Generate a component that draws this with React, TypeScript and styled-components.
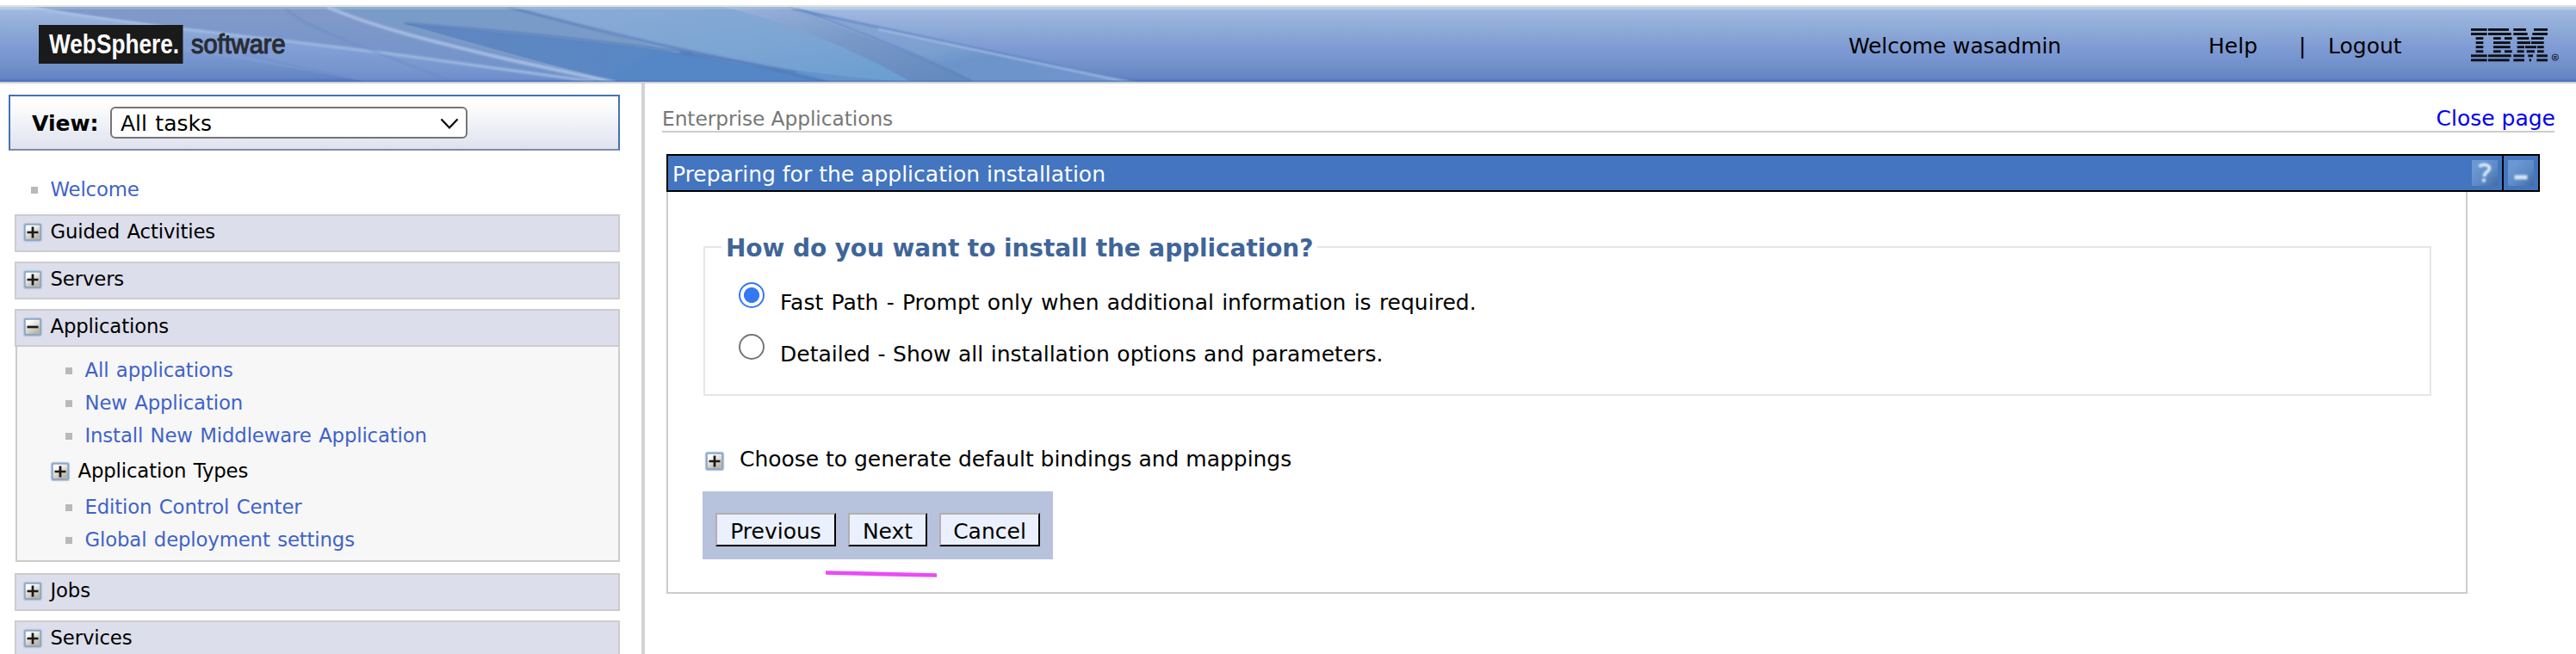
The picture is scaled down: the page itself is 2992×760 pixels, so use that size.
import React from "react";
import styled, { createGlobalStyle } from "styled-components";

const GlobalStyle = createGlobalStyle`
  * { box-sizing: border-box; }
  body {
    margin: 0;
    background: #fff;
    color: #000;
    font-family: "DejaVu Sans", Verdana, sans-serif;
    font-size: 25px;
    line-height: 30px;
  }
`;

const Page = styled.div`
  display: flex;
  flex-direction: column;
  width: 2992px;
  height: 760px;
  overflow: hidden;
`;

/* ---------- banner ---------- */

const Banner = styled.header`
  position: relative;
  flex: none;
  display: flex;
  justify-content: space-between;
  height: 91px;
  margin-top: 6px;
  border-top: 2px solid #e0e2de;
  border-bottom: 2px solid #cfcfd1;
`;

const BannerArt = styled.svg`
  position: absolute;
  inset: 0;
  display: block;
`;

const Brand = styled.div`
  position: relative;
  display: flex;
  margin: 21px 0 0 45px;
`;

const BannerNav = styled.nav`
  position: relative;
  display: grid;
  grid-template-columns: 418px 105px 34px 166px 122px;
  padding-top: 31px;
  white-space: nowrap;
`;

const NavItem = styled.span<{ $tracking?: number }>`
  line-height: 30px;
  letter-spacing: ${(p) => p.$tracking ?? 0}px;
`;

const IbmMark = styled.svg`
  display: block;
  margin-top: -6px;
`;

/* ---------- frames ---------- */

const Frames = styled.div`
  flex: 1;
  min-height: 0;
  display: flex;
`;

const Sidebar = styled.aside`
  flex: none;
  width: 749px;
  padding: 13px 25px 0 10px;
  border-right: 4px solid #d3d3d3;
  font-size: 22.8px;
  letter-spacing: -0.15px;
  word-spacing: 1.4px;
`;

const ViewBox = styled.div`
  display: flex;
  align-items: center;
  height: 65px;
  padding: 0 0 0 25px;
  border: 2px solid #4571b2;
  border-bottom-color: #7b8ca5;
  background: linear-gradient(#fff 10%, #dfe2ef);
  font-size: 25px;
  letter-spacing: 0;
`;

const ViewLabel = styled.label`
  width: 91px;
  font-weight: bold;
  padding-top: 2px;
`;

const ViewSelect = styled.div`
  display: flex;
  align-items: center;
  justify-content: space-between;
  width: 415px;
  height: 37px;
  padding: 2px 8px 0 10px;
  border: 2px solid #767676;
  border-radius: 6px;
  background: #fff;
`;

const Tree = styled.div`
  padding-left: 7px;
`;

const LinkRow = styled.div<{ $indent: number }>`
  display: flex;
  align-items: center;
  gap: 14.5px;
  height: 38px;
  padding-left: ${(p) => p.$indent}px;
  color: #3f63c9;
  &::before {
    content: "";
    width: 8px;
    height: 8px;
    margin-top: 2px;
    background: #b9b9b9;
  }
`;

const WelcomeRow = styled(LinkRow)`
  margin: 26px 0 10px;
`;

const Section = styled.section<{ $gap?: number }>`
  margin-bottom: ${(p) => p.$gap ?? 11}px;
`;

const SectionHead = styled.div`
  display: flex;
  align-items: center;
  gap: 8.5px;
  height: 44px;
  padding: 0 0 4px 7px;
  border: 2px solid #ccc;
  background: #dddeeb;
`;

const SectionBody = styled.div`
  height: 250px;
  margin-left: 1px;
  padding-top: 8px;
  border: 2px solid #ccc;
  border-top: 0;
  background: #f7f7f7;
`;

const GroupRow = styled.div`
  display: flex;
  align-items: center;
  gap: 8.5px;
  height: 45px;
  padding: 0 0 1px 38px;
`;

const ToggleSvg = styled.svg<{ $drop: number }>`
  flex: none;
  display: block;
  margin-top: ${(p) => p.$drop}px;
`;

/* ---------- content ---------- */

const Content = styled.main`
  flex: 1;
  padding: 0 25px 0 20px;
`;

const Crumb = styled.div`
  display: flex;
  justify-content: space-between;
  align-items: baseline;
  height: 57px;
  padding-top: 26px;
  border-bottom: 2px solid #ccc;
`;

const CrumbTitle = styled.span`
  font-size: 23.3px;
  letter-spacing: -0.06px;
  color: #777;
`;

const CloseLink = styled.a`
  margin-right: -1px;
  color: #0000ee;
`;

const TitleBar = styled.div`
  display: flex;
  width: 2176px;
  height: 44px;
  margin: 25px 0 0 5px;
  border: 2px solid #000;
  background: #4475c0;
`;

const TitleText = styled.h1`
  flex: 1;
  margin: 0;
  padding: 7px 0 0 5px;
  color: #fff;
  font-size: 25px;
  font-weight: normal;
`;

const TitleAction = styled.div`
  display: flex;
  align-items: center;
  padding: 0 5px;
  & + & {
    border-left: 2px solid #000;
  }
`;

const Panel = styled.div`
  width: 2092px;
  height: 467px;
  margin-left: 5px;
  padding: 46px 40px 0 40px;
  border: 2px solid #ccc;
  border-top: 0;
`;

const Choices = styled.fieldset`
  height: 191px;
  margin: 0 0 0 1px;
  padding: 23px 0 0 19px;
  border: 2px solid #e6e6e6;
`;

const Question = styled.legend`
  padding: 3px 5px 0 5px;
  color: #3f6599;
  font-size: 28px;
  font-weight: bold;
  line-height: 33px;
  letter-spacing: -0.09px;
`;

const Choice = styled.label`
  display: flex;
  height: 60px;
  padding-left: 20px;
`;

const Radio = styled.input`
  appearance: none;
  width: 30px;
  height: 30px;
  margin: 0;
  border: 2px solid #767676;
  border-radius: 50%;
  background: #fff;
  &:checked {
    border-color: #3478f6;
    background: radial-gradient(circle, #3478f6 8.6px, #fff 9.4px);
  }
`;

const ChoiceText = styled.span<{ $words: number }>`
  margin: 9px 0 0 18px;
  word-spacing: ${(p) => p.$words}px;
`;

const Expander = styled.div`
  display: flex;
  align-items: center;
  gap: 17px;
  height: 30px;
  margin: 59px 0 22px;
  padding-left: 2px;
  letter-spacing: -0.03px;
`;

const ButtonTray = styled.div`
  position: relative;
  display: flex;
  gap: 14px;
  width: 407px;
  height: 79px;
  padding: 25px 15px 0;
  background: #b7c3dc;
`;

const PushButton = styled.button<{ $width: number }>`
  width: ${(p) => p.$width}px;
  height: 39px;
  padding: 4px 0 0;
  border: 2px solid;
  border-color: #b0b0b0 #000 #000 #b0b0b0;
  background: #ebf0fe;
  color: #000;
  font: inherit;
  line-height: 30px;
`;

const Underscore = styled.svg`
  position: absolute;
  left: 143px;
  top: 91px;
`;

/* ---------- drawings ---------- */

function Toggle({ open = false, drop = 0 }: { open?: boolean; drop?: number }) {
  return (
    <ToggleSvg $drop={drop} width="24" height="24" viewBox="0 0 24 24">
      <defs>
        <linearGradient id="face" x1="0" y1="0" x2="0.6" y2="1">
          <stop offset="0.2" stopColor="#fff" />
          <stop offset="1" stopColor="#bdb5a6" />
        </linearGradient>
      </defs>
      <rect x="0.8" y="0.8" width="22.4" height="22.4" rx="3.5" fill="#b9c9de" />
      <rect x="2" y="2" width="20" height="20" rx="2" fill="#8da7c6" />
      <rect x="3.8" y="3.8" width="16.4" height="16.2" rx="0.8" fill="url(#face)" />
      <path d={open ? "M5.5 12H18.5" : "M5.5 12H18.5M12 5.5V18.5"} stroke="#1a1a1a" strokeWidth="2.7" />
    </ToggleSvg>
  );
}

function Artwork() {
  return (
    <BannerArt width="2992" height="87" viewBox="0 8 2992 87">
      <defs>
        <linearGradient id="sky" x1="0" y1="0" x2="0" y2="1">
          <stop offset="0" stopColor="#b9d0ea" />
          <stop offset="0.035" stopColor="#b3cae8" />
          <stop offset="0.045" stopColor="#a0b8e0" />
          <stop offset="0.35" stopColor="#8aa7d6" />
          <stop offset="0.56" stopColor="#7e9ad4" />
          <stop offset="0.8" stopColor="#7090c9" />
          <stop offset="0.95" stopColor="#6383c4" />
          <stop offset="1" stopColor="#4b70be" />
        </linearGradient>
        <linearGradient id="swoop" x1="0" y1="0" x2="0" y2="1">
          <stop offset="0" stopColor="#829ac8" />
          <stop offset="1" stopColor="#6f92cc" />
        </linearGradient>
        <linearGradient id="deep" x1="0" y1="0" x2="1" y2="0">
          <stop offset="0" stopColor="#6186c0" />
          <stop offset="1" stopColor="#5289c7" />
        </linearGradient>
        <linearGradient id="pale" x1="0" y1="0" x2="0.9" y2="1">
          <stop offset="0" stopColor="#8cabd6" />
          <stop offset="0.6" stopColor="#7ca5d3" />
          <stop offset="1" stopColor="#6b9ed1" />
        </linearGradient>
        <linearGradient id="steel" x1="0" y1="0" x2="0.8" y2="1">
          <stop offset="0" stopColor="#9bb3db" />
          <stop offset="0.5" stopColor="#7899c7" />
          <stop offset="1" stopColor="#648abf" />
        </linearGradient>
        <linearGradient id="veil" x1="0" y1="0" x2="1" y2="1">
          <stop offset="0" stopColor="#8caad8" />
          <stop offset="0.5" stopColor="#7b9fd0" />
          <stop offset="0.62" stopColor="#6c94ca" />
          <stop offset="1" stopColor="#7294cf" />
        </linearGradient>
        <filter id="soft" x="-5%" y="-20%" width="110%" height="140%">
          <feGaussianBlur stdDeviation="1" />
        </filter>
      </defs>
      <rect y="8" width="2992" height="87" fill="url(#sky)" />
      <path d="M40 8C160 28 330 48 520 71C600 82 660 90 700 95H860V8Z" fill="url(#swoop)" />
      <path d="M150 55C260 62 330 78 425 95H700C630 84 480 66 350 51Z" fill="#8aa5da" opacity="0.35" />
      <path d="M385 8H600L960 95H715C600 67 480 38 385 8Z" fill="#789bc8" />
      <path d="M468 27C560 36 720 50 820 66L975 95H715C620 70 540 48 468 27Z" fill="url(#deep)" />
      <path d="M590 8H920L1060 95H900C780 60 690 32 590 8Z" fill="url(#pale)" />
      <path d="M840 8H915L1140 95H1058C1000 62 930 30 840 8Z" fill="url(#steel)" />
      <path d="M915 8L1322 95H1132C1070 62 990 28 915 8Z" fill="url(#veil)" />
      <path d="M800 62C860 76 940 90 1045 95H700L760 60Z" fill="#5587c6" />
      <path d="M880 76C940 84 990 90 1050 95H965C930 88 900 82 880 76Z" fill="#6494cb" />
      <g fill="none" filter="url(#soft)">
        <path d="M30 8C160 30 330 46 480 66C570 78 640 88 690 95" stroke="#a5c0e4" strokeWidth="3" opacity="0.85" />
        <path d="M380 8C430 30 500 48 590 69L715 96" stroke="#a4bce2" strokeWidth="4" />
        <path d="M330 8C350 32 440 60 525 95" stroke="#6482bd" strokeWidth="2" opacity="0.45" />
        <path d="M280 62L420 95" stroke="#5f7fbd" strokeWidth="2" opacity="0.35" />
        <path d="M470 27C590 36 720 50 805 62" stroke="#5379b8" strokeWidth="2" opacity="0.8" />
        <path d="M590 8C690 34 790 60 925 84" stroke="#5c80b8" strokeWidth="3" opacity="0.8" />
        <path d="M790 61C860 72 900 80 960 95" stroke="#4c76b8" strokeWidth="3" opacity="0.7" />
        <path d="M925 10C1000 36 1070 66 1132 96" stroke="#5f83bd" strokeWidth="2.5" opacity="0.7" />
        <path d="M920 10L1316 95" stroke="#5c7fbf" strokeWidth="2" opacity="0.8" />
        <path d="M1020 34L1316 97" stroke="#a9c1e8" strokeWidth="2" opacity="0.9" />
      </g>
      <rect y="8" width="2992" height="3" fill="#b4d0e8" opacity="0.35" />
      <rect y="93.5" width="2992" height="1.5" fill="#4a72c0" opacity="0.7" />
    </BannerArt>
  );
}

function WebSphereBrand() {
  return (
    <Brand>
      <svg width="168" height="45" viewBox="0 0 168 45">
        <rect width="167.5" height="45" fill="#1a1a1a" />
        <text transform="translate(12 33) scale(0.82 1)" fontFamily="Liberation Sans, Arial, sans-serif" fontSize="32" fontWeight="bold" fill="#fff">
          WebSphere.
        </text>
      </svg>
      <svg width="130" height="45" viewBox="0 0 130 45">
        <text transform="translate(9 33) scale(0.935 1)" fontFamily="Liberation Sans, Arial, sans-serif" fontSize="31" fill="#2a2c33" stroke="#2a2c33" strokeWidth="1.2">
          software
        </text>
      </svg>
    </Brand>
  );
}

/* Each entry is one stripe: pairs of start and end positions. */
const stripes: number[][][] = [
  [[0, 56], [60, 132], [148, 192], [219, 267]],
  [[0, 56], [60, 140], [148, 197], [214, 267]],
  [[17, 43], [78, 104], [117, 143], [161, 202], [210, 254]],
  [[17, 43], [78, 137], [161, 207], [210, 254]],
  [[17, 43], [78, 137], [161, 186], [189, 228], [231, 254]],
  [[17, 43], [78, 104], [117, 143], [161, 185], [194, 222], [231, 254]],
  [[0, 56], [60, 140], [148, 186], [199, 216], [229, 267]],
  [[0, 56], [60, 134], [148, 186], [203, 210], [229, 267]],
];

function Ibm() {
  return (
    <IbmMark width="106" height="40" viewBox="0 0 318 120">
      {stripes.map((row, r) =>
        row.map(([a, b]) => <rect key={`${r}-${a}`} x={a} y={r * 15.2} width={b - a} height="8.6" fill="#0b0d12" />)
      )}
      <circle cx="293.5" cy="101" r="11" fill="none" stroke="#1b2436" strokeWidth="3" />
      <text x="293.5" y="107" textAnchor="middle" fontFamily="Liberation Sans, Arial, sans-serif" fontWeight="bold" fontSize="17" fill="#0b0d12">
        R
      </text>
    </IbmMark>
  );
}

function BarIcon({ kind }: { kind: "help" | "minimize" }) {
  return (
    <svg width="30" height="30" viewBox="0 0 30 30">
      <defs>
        <linearGradient id="tile" x1="0" y1="0" x2="1" y2="1">
          <stop offset="0.2" stopColor="#6c98d3" />
          <stop offset="0.6" stopColor="#5c8ac6" />
          <stop offset="1" stopColor="#44699f" />
        </linearGradient>
        <filter id="glow" filterUnits="userSpaceOnUse" x="0" y="0" width="30" height="30">
          <feGaussianBlur stdDeviation="0.8" />
        </filter>
      </defs>
      <rect width="30" height="30" fill="url(#tile)" />
      {kind === "help" ? (
        <g fill="none" stroke="#dbe9fa" filter="url(#glow)">
          <path d="M8.5 7.5C12 4.5 20.5 4.5 20.5 9.8C20.5 13.8 14.5 13.5 14.5 19" strokeWidth="3.8" />
          <path d="M12 23.5H16" strokeWidth="3.8" />
        </g>
      ) : (
        <rect x="7.5" y="17.5" width="15" height="5" fill="#d5e6f8" filter="url(#glow)" />
      )}
    </svg>
  );
}

/* ---------- page ---------- */

export default function App() {
  return (
    <Page>
      <GlobalStyle />
      <Banner>
        <Artwork />
        <WebSphereBrand />
        <BannerNav>
          <NavItem $tracking={-0.15}>Welcome wasadmin</NavItem>
          <NavItem>Help</NavItem>
          <NavItem>|</NavItem>
          <NavItem>Logout</NavItem>
          <Ibm />
        </BannerNav>
      </Banner>
      <Frames>
        <Sidebar>
          <ViewBox>
            <ViewLabel>View:</ViewLabel>
            <ViewSelect>
              All tasks
              <svg width="22" height="14" viewBox="0 0 22 14">
                <path d="M1.5 1.5L11 11.5L20.5 1.5" fill="none" stroke="#000" strokeWidth="2.2" />
              </svg>
            </ViewSelect>
          </ViewBox>
          <Tree>
            <WelcomeRow $indent={19}>Welcome</WelcomeRow>
            <Section>
              <SectionHead><Toggle drop={2} />Guided Activities</SectionHead>
            </Section>
            <Section>
              <SectionHead><Toggle drop={2} />Servers</SectionHead>
            </Section>
            <Section $gap={13}>
              <SectionHead><Toggle open drop={2} />Applications</SectionHead>
              <SectionBody>
                <LinkRow $indent={56}>All applications</LinkRow>
                <LinkRow $indent={56}>New Application</LinkRow>
                <LinkRow $indent={56}>Install New Middleware Application</LinkRow>
                <GroupRow><Toggle drop={1} />Application Types</GroupRow>
                <LinkRow $indent={56}>Edition Control Center</LinkRow>
                <LinkRow $indent={56}>Global deployment settings</LinkRow>
              </SectionBody>
            </Section>
            <Section>
              <SectionHead><Toggle drop={2} />Jobs</SectionHead>
            </Section>
            <Section>
              <SectionHead><Toggle drop={2} />Services</SectionHead>
            </Section>
          </Tree>
        </Sidebar>
        <Content>
          <Crumb>
            <CrumbTitle>Enterprise Applications</CrumbTitle>
            <CloseLink>Close page</CloseLink>
          </Crumb>
          <TitleBar>
            <TitleText>Preparing for the application installation</TitleText>
            <TitleAction><BarIcon kind="help" /></TitleAction>
            <TitleAction><BarIcon kind="minimize" /></TitleAction>
          </TitleBar>
          <Panel>
            <Choices>
              <Question>How do you want to install the application?</Question>
              <Choice>
                <Radio type="radio" name="path" defaultChecked />
                <ChoiceText $words={1.3}>Fast Path - Prompt only when additional information is required.</ChoiceText>
              </Choice>
              <Choice>
                <Radio type="radio" name="path" />
                <ChoiceText $words={0.6}>Detailed - Show all installation options and parameters.</ChoiceText>
              </Choice>
            </Choices>
            <Expander>
              <Toggle drop={3} />
              Choose to generate default bindings and mappings
            </Expander>
            <ButtonTray>
              <PushButton $width={140}>Previous</PushButton>
              <PushButton $width={92}>Next</PushButton>
              <PushButton $width={117}>Cancel</PushButton>
              <Underscore width="130" height="10" viewBox="0 0 130 10">
                <path d="M0 3.5L129 6.5" stroke="#ea4cf5" strokeWidth="4.6" />
              </Underscore>
            </ButtonTray>
          </Panel>
        </Content>
      </Frames>
    </Page>
  );
}
